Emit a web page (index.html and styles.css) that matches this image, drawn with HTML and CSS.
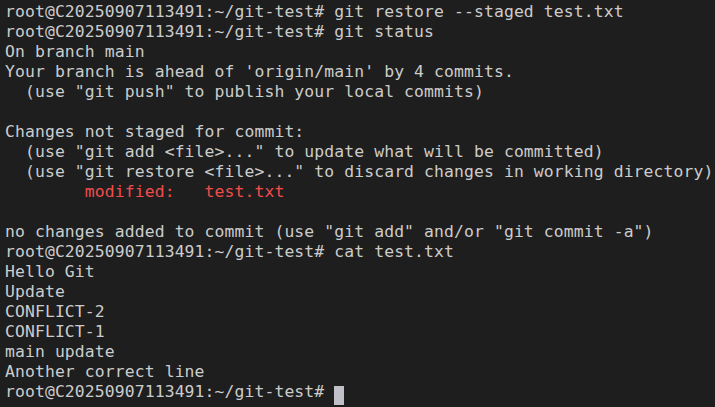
FILE: index.html
```html
<!DOCTYPE html>
<html>
<head>
<meta charset="utf-8">
<link rel="stylesheet" href="styles.css">
</head>
<body>
<pre class="term">root@C20250907113491:~/git-test# git restore --staged test.txt
root@C20250907113491:~/git-test# git status
On branch main
Your branch is ahead of 'origin/main' by 4 commits.
  (use "git push" to publish your local commits)

Changes not staged for commit:
  (use "git add &lt;file&gt;..." to update what will be committed)
  (use "git restore &lt;file&gt;..." to discard changes in working directory)
        <span class="red">modified:   test.txt</span>

no changes added to commit (use "git add" and/or "git commit -a")
root@C20250907113491:~/git-test# cat test.txt
Hello Git
Update
CONFLICT-2
CONFLICT-1
main update
Another correct line
root@C20250907113491:~/git-test# <span class="cursor"> </span></pre>
</body>
</html>
```
FILE: styles.css
```css
html, body {
  margin: 0;
  padding: 0;
  background: #1e1e1e;
  height: 100%;
  overflow: hidden;
}
.term {
  margin: 0;
  padding: 2px 0 0 5px;
  font-family: "DejaVu Sans Mono", monospace;
  font-size: 16.4px;
  letter-spacing: 0.11px;
  line-height: 20px;
  color: #cccccc;
  white-space: pre;
}
.red {
  color: #f14c4c;
}
.cursor {
  display: inline-block;
  width: 10px;
  height: 19px;
  background: #c0c0c8;
  vertical-align: -4px;
}
```
